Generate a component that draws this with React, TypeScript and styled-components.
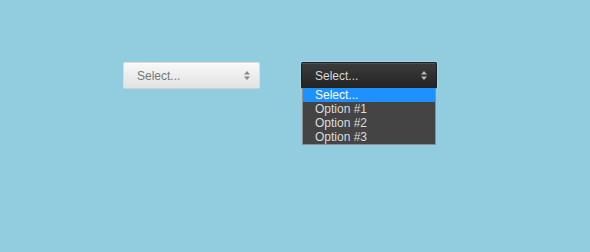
import React from 'react'
import styled, { createGlobalStyle } from 'styled-components'

const Global = createGlobalStyle`
    html, body {
        margin: 0;
        padding: 0;
        background: #91cddf;
        height: 100%;
    }
    body {
        font-family: "Liberation Sans", Arial, sans-serif;
    }
`

const Page = styled.div`
    display: flex;
    align-items: flex-start;
    gap: 41px;
    padding: 62px 0 0 123px;
    height: 252px;
    box-sizing: border-box;
`

const Field = styled.div<{ $dark?: boolean }>`
    position: relative;
    width: ${p => (p.$dark ? 136 : 137)}px;
    height: 27px;
    box-sizing: border-box;
    display: flex;
    align-items: center;
    justify-content: space-between;
    padding: 0 9px 0 13px;
    border-radius: 2px;
    font-size: 12px;
    color: ${p => (p.$dark ? '#d8d8d8' : '#777')};
    border: 1px solid ${p => (p.$dark ? '#15202c' : '#dcdcdc')};
    border-bottom-color: ${p => (p.$dark ? '#1c3a5e' : '#d0d0d0')};
    background: ${p =>
        p.$dark
            ? 'linear-gradient(#3c3c3c, #232323)'
            : 'linear-gradient(#f8f8f8, #e2e2e2)'};
    box-shadow: ${p =>
        p.$dark
            ? 'inset 0 1px rgba(255,255,255,0.12), 0 0 0 1px rgba(200,230,245,0.35)'
            : 'inset 0 1px #fff'};
`

const Arrows = styled.svg`
    display: block;
`

const List = styled.ul`
    position: absolute;
    top: 26px;
    left: 1px;
    width: 134px;
    margin: 0;
    padding: 0;
    list-style: none;
    background: #444;
    border: 1px solid #8a8f94;
    border-top: none;
    box-sizing: border-box;
`

const Item = styled.li<{ $active?: boolean }>`
    height: 14px;
    line-height: 15px;
    padding-left: 12px;
    font-size: 12px;
    color: ${p => (p.$active ? '#fff' : '#dcdcdc')};
    background: ${p => (p.$active ? '#1e90ff' : 'transparent')};
`

const Wrap = styled.div`
    position: relative;
`

const ArrowIcon = ({ color }: { color: string }) => (
    <Arrows width="6" height="9" viewBox="0 0 6 9">
        <path d="M3 0 L6 3.5 H0 Z" fill={color} />
        <path d="M3 9 L6 5.5 H0 Z" fill={color} />
    </Arrows>
)

const options = ['Select...', 'Option #1', 'Option #2', 'Option #3']

const App = () => {
    return (
        <>
            <Global />
            <Page>
                <Field>
                    <span>Select...</span>
                    <ArrowIcon color="#888" />
                </Field>
                <Wrap>
                    <Field $dark>
                        <span>Select...</span>
                        <ArrowIcon color="#bbb" />
                    </Field>
                    <List>
                        {options.map((o, i) => (
                            <Item key={o} $active={i === 0}>{o}</Item>
                        ))}
                    </List>
                </Wrap>
            </Page>
        </>
    )
}

export default App
